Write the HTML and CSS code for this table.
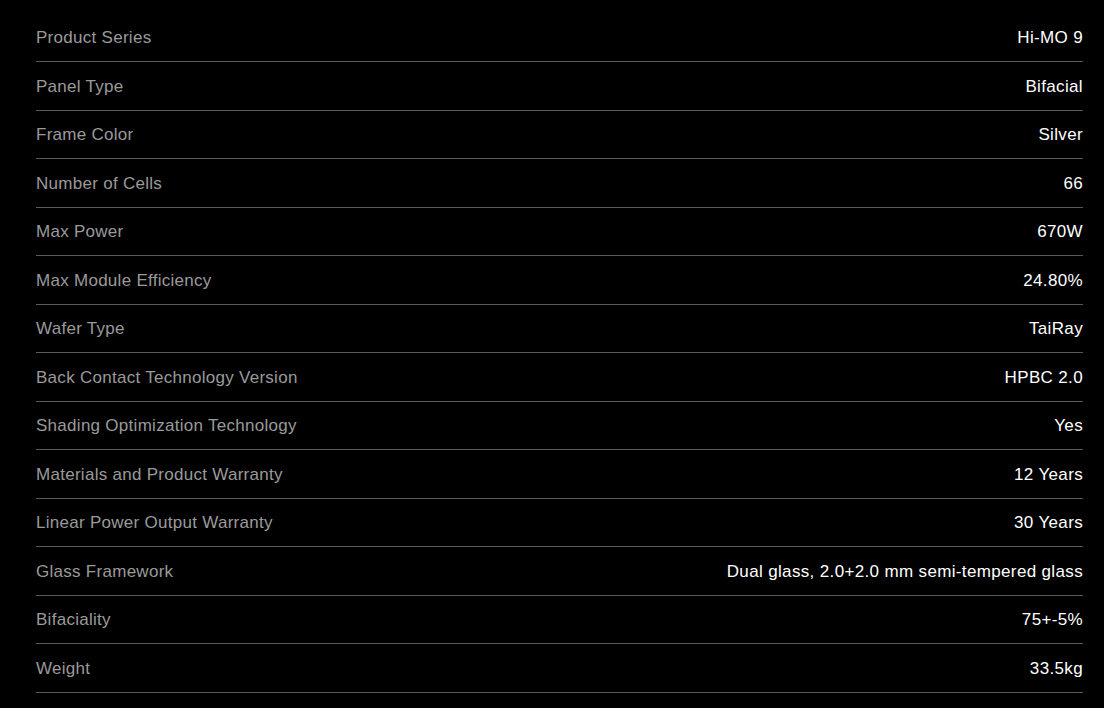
FILE: index.html
```html
<!DOCTYPE html>
<html lang="en">
<head>
<meta charset="utf-8">
<title>Specifications</title>
<link rel="stylesheet" href="styles.css">
</head>
<body>
<div class="specs">
  <div class="row"><span class="label">Product Series</span><span class="value">Hi-MO 9</span></div>
  <div class="row"><span class="label">Panel Type</span><span class="value">Bifacial</span></div>
  <div class="row"><span class="label">Frame Color</span><span class="value">Silver</span></div>
  <div class="row"><span class="label">Number of Cells</span><span class="value">66</span></div>
  <div class="row"><span class="label">Max Power</span><span class="value">670W</span></div>
  <div class="row"><span class="label">Max Module Efficiency</span><span class="value">24.80%</span></div>
  <div class="row"><span class="label">Wafer Type</span><span class="value">TaiRay</span></div>
  <div class="row"><span class="label">Back Contact Technology Version</span><span class="value">HPBC 2.0</span></div>
  <div class="row"><span class="label">Shading Optimization Technology</span><span class="value">Yes</span></div>
  <div class="row"><span class="label">Materials and Product Warranty</span><span class="value">12 Years</span></div>
  <div class="row"><span class="label">Linear Power Output Warranty</span><span class="value">30 Years</span></div>
  <div class="row"><span class="label">Glass Framework</span><span class="value">Dual glass, 2.0+2.0 mm semi-tempered glass</span></div>
  <div class="row"><span class="label">Bifaciality</span><span class="value">75+-5%</span></div>
  <div class="row"><span class="label">Weight</span><span class="value">33.5kg</span></div>
</div>
</body>
</html>
```
FILE: styles.css
```css
html, body {
  margin: 0;
  padding: 0;
  background: #000;
}
body {
  font-family: "Liberation Sans", Arial, sans-serif;
  font-size: 17px;
  overflow: hidden;
}
.specs {
  padding: 13.5px 21px 0 36px;
  display: flex;
  flex-direction: column;
}
.row {
  display: flex;
  justify-content: space-between;
  align-items: center;
  box-sizing: border-box;
  height: 48.5px;
  padding-top: 2px;
  border-bottom: 1px solid #5a5a5a;
}
.label {
  color: #9a9a9a;
  letter-spacing: 0.28px;
}
.value {
  color: #fff;
  letter-spacing: 0.35px;
}
```
